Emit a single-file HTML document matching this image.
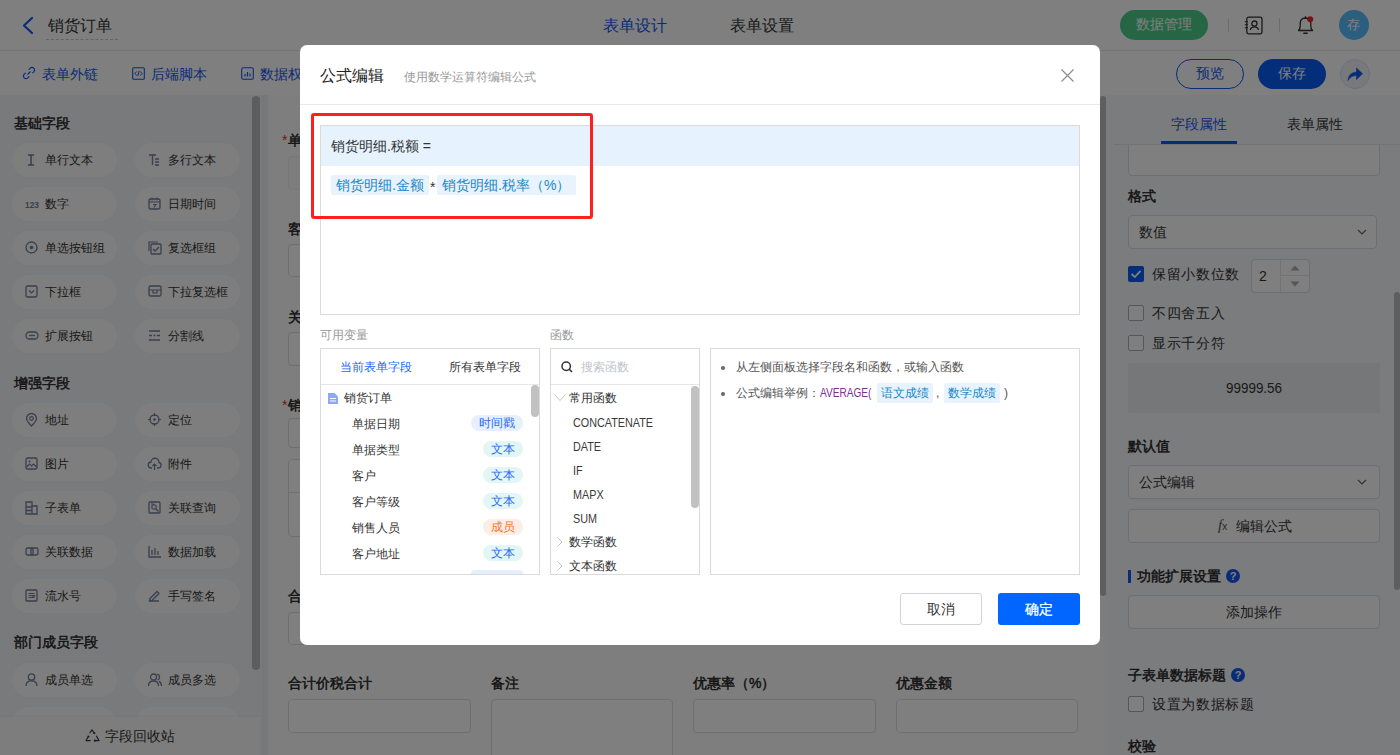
<!DOCTYPE html>
<html><head><meta charset="utf-8">
<style>
*{box-sizing:border-box;margin:0;padding:0}
html,body{width:1400px;height:755px;overflow:hidden;background:#fff}
body{position:relative;font-family:"Liberation Sans",sans-serif;color:#333}
.a{position:absolute}
.t{position:absolute;white-space:nowrap;line-height:20px}
svg{position:absolute;overflow:visible}
/* left chips */
.chip{position:absolute;width:105px;height:34px;border-radius:17px;background:#fcfcfd}
.chip .t{font-size:12px;color:#333;top:7px}
.sec{position:absolute;font-size:14px;-webkit-text-stroke:0.45px #262626;color:#262626;line-height:20px;white-space:nowrap}
.inp{position:absolute;border:1px solid #dcdfe6;border-radius:4px;background:#fff}
.flabel{position:absolute;font-size:14px;-webkit-text-stroke:0.45px #262626;color:#262626;line-height:20px;white-space:nowrap}
.rp .inp{background:#fff}
.cb{position:absolute;width:16px;height:16px;border:1px solid #a9aebd;border-radius:2px;background:#fff}
.mask{position:absolute;left:0;top:0;width:1400px;height:755px;background:rgba(0,0,0,0.5)}
.modal{position:absolute;left:300px;top:45px;width:800px;height:600px;background:#fff;border-radius:7px}
.tag{position:absolute;height:20px;background:#e8f3fd;border-radius:2px;color:#2188c8;font-size:14px;line-height:20px;white-space:nowrap}
.vrow{position:absolute;left:352px;font-size:12px;color:#333;line-height:20px;white-space:nowrap}
.badge{position:absolute;height:16px;border-radius:8px;font-size:12px;line-height:16px;text-align:center;white-space:nowrap}
.fn{position:absolute;font-size:12px;color:#333;line-height:20px;white-space:nowrap}
</style></head><body>

<!-- ===== HEADER ===== -->
<div class="a" style="left:0;top:0;width:1400px;height:95px;background:#fff"></div>
<div class="a" style="left:0;top:50px;width:1400px;height:1px;background:#e9ebef"></div>
<svg style="left:0;top:0" width="40" height="50"><path d="M32 18 L24 25.5 L32 33" fill="none" stroke="#1456f0" stroke-width="2.2" stroke-linecap="round" stroke-linejoin="round"/></svg>
<div class="t" style="left:48px;top:16px;font-size:16px;color:#333">销货订单</div>
<div class="a" style="left:46px;top:39px;width:72px;height:0;border-top:1px dashed #c8c8c8"></div>
<div class="t" style="left:603px;top:16px;font-size:16px;color:#1456f0">表单设计</div>
<div class="t" style="left:730px;top:16px;font-size:16px;color:#333">表单设置</div>

<div class="a" style="left:1120px;top:10px;width:88px;height:30px;border-radius:15px;background:#4ccd8a"></div>
<div class="t" style="left:1136px;top:14px;font-size:14px;color:#fff">数据管理</div>
<div class="a" style="left:1228px;top:18px;width:1px;height:14px;background:#d9d9d9"></div>
<div class="a" style="left:1279px;top:18px;width:1px;height:14px;background:#d9d9d9"></div>
<svg style="left:1244px;top:16px" width="20" height="20"><rect x="2.8" y="1.2" width="15.2" height="16.6" rx="1.8" fill="none" stroke="#333" stroke-width="1.3"/><circle cx="10.4" cy="7.6" r="2.6" fill="none" stroke="#333" stroke-width="1.3"/><path d="M6.3 14 Q6.8 10.8 10.4 10.8 Q14 10.8 14.5 14" fill="none" stroke="#333" stroke-width="1.3"/><path d="M0.8 5.8h3.2M0.8 8.8h3.2M0.8 11.8h3.2" stroke="#333" stroke-width="1.1"/></svg>
<svg style="left:1296px;top:15px" width="20" height="20"><path d="M2.5 15.5 Q4.2 14 4.2 11 L4.2 8.5 Q4.2 3.2 9.5 3 Q14.8 3.2 14.8 8.5 L14.8 11 Q14.8 14 16.5 15.5 Z" fill="none" stroke="#333" stroke-width="1.3" stroke-linejoin="round"/><path d="M7.8 18.3 h3.4" stroke="#333" stroke-width="1.4" stroke-linecap="round"/><path d="M9.5 1.2v1.8" stroke="#333" stroke-width="1.3"/><circle cx="14.2" cy="4.2" r="3" fill="#f5222d"/></svg>
<div class="a" style="left:1339px;top:10px;width:30px;height:30px;border-radius:50%;background:#56bcff"></div>
<div class="t" style="left:1347px;top:15px;font-size:13px;color:#fff">存</div>

<!-- toolbar -->
<svg style="left:22px;top:66px" width="14" height="14"><path d="M5.5 8.5 L8.5 5.5" stroke="#1456f0" stroke-width="1.1"/><path d="M6.8 3.6 L8.2 2.2 Q10 .6 11.8 2.2 Q13.4 4 11.8 5.8 L10.4 7.2 M7.2 10.4 L5.8 11.8 Q4 13.4 2.2 11.8 Q.6 10 2.2 8.2 L3.6 6.8" fill="none" stroke="#1456f0" stroke-width="1.1"/></svg>
<div class="t" style="left:42px;top:64px;font-size:14px;color:#1456f0">表单外链</div>
<svg style="left:132px;top:67px" width="13" height="13"><rect x=".7" y=".7" width="11.6" height="11.6" rx="1" fill="none" stroke="#1456f0" stroke-width="1.1"/><path d="M4.5 4.5 L3 6.5 L4.5 8.5 M8.5 4.5 L10 6.5 L8.5 8.5 M7.2 3.8 L5.8 9.2" fill="none" stroke="#1456f0" stroke-width="1"/></svg>
<div class="t" style="left:151px;top:64px;font-size:14px;color:#1456f0">后端脚本</div>
<svg style="left:241px;top:67px" width="13" height="13"><rect x=".7" y=".7" width="11.6" height="11.6" rx="1.5" fill="none" stroke="#1456f0" stroke-width="1.1"/><path d="M4 9.5v-2.5M6.5 9.5v-4.5M9 9.5v-3" stroke="#1456f0" stroke-width="1.2"/></svg>
<div class="t" style="left:260px;top:64px;font-size:14px;color:#1456f0">数据权限</div>

<div class="a" style="left:1176px;top:59px;width:68px;height:30px;border-radius:15px;border:1.5px solid #1456f0;background:#fff"></div>
<div class="t" style="left:1196px;top:63px;font-size:14px;color:#1456f0">预览</div>
<div class="a" style="left:1258px;top:59px;width:68px;height:30px;border-radius:15px;background:#0a5cf5"></div>
<div class="t" style="left:1278px;top:63px;font-size:14px;color:#fff">保存</div>
<div class="a" style="left:1340px;top:59px;width:30px;height:30px;border-radius:50%;border:1px solid #d6e2f7;background:#eef3fb"></div>
<svg style="left:1346px;top:65px" width="18" height="18"><path d="M2 15.5 Q2.5 7.5 10.5 7 L10.5 3 L16.5 8.8 L10.5 14.5 L10.5 10.6 Q5 10.4 2 15.5 Z" fill="#1456f0" stroke="#1456f0" stroke-width="0.6" stroke-linejoin="round"/></svg>

<!-- ===== LEFT PANEL ===== -->
<div class="a" style="left:0;top:95px;width:262px;height:660px;background:#f3f4f6"></div>
<div class="a" style="left:252px;top:96px;width:8px;height:574px;border-radius:4px;background:#b9babd"></div>
<div class="sec" style="left:14px;top:113px">基础字段</div>
<div class="sec" style="left:14px;top:373px">增强字段</div>
<div class="sec" style="left:14px;top:632px">部门成员字段</div>
<div class="chip" style="left:12px;top:143px"><svg style="left:13px;top:10px" width="14" height="14"><path d="M3 2h6M6 2v10M3 12h6" stroke="#737e9c" stroke-width="1.5" fill="none"/></svg><div class="t" style="left:33px">单行文本</div></div>
<div class="chip" style="left:135px;top:143px"><svg style="left:13px;top:10px" width="14" height="14"><path d="M1 2h7M4.5 2v10M7 6h4M7 9h4M7 12h4" stroke="#737e9c" stroke-width="1.4" fill="none"/></svg><div class="t" style="left:33px">多行文本</div></div>
<div class="chip" style="left:12px;top:187px"><svg style="left:13px;top:10px" width="14" height="14"><text x="0" y="10.5" font-size="9.5" font-weight="bold" fill="#737e9c" font-family="Liberation Sans" textLength="14" lengthAdjust="spacingAndGlyphs">123</text></svg><div class="t" style="left:33px">数字</div></div>
<div class="chip" style="left:135px;top:187px"><svg style="left:13px;top:10px" width="14" height="14"><rect x="1" y="2" width="11" height="10" rx="1.5" stroke="#737e9c" stroke-width="1.3" fill="none"/><path d="M1 5h11M4 0.5v3M9 0.5v3M5 7.5h3l-2 3" stroke="#737e9c" stroke-width="1.1" fill="none"/></svg><div class="t" style="left:33px">日期时间</div></div>
<div class="chip" style="left:12px;top:231px"><svg style="left:13px;top:10px" width="14" height="14"><circle cx="6.5" cy="6.5" r="5.5" stroke="#737e9c" stroke-width="1.3" fill="none"/><circle cx="6.5" cy="6.5" r="1.8" fill="#737e9c"/></svg><div class="t" style="left:33px">单选按钮组</div></div>
<div class="chip" style="left:135px;top:231px"><svg style="left:13px;top:10px" width="14" height="14"><path d="M1 10V1h9" stroke="#737e9c" stroke-width="1.2" fill="none"/><rect x="3" y="3" width="10" height="10" rx="1" stroke="#737e9c" stroke-width="1.3" fill="none"/><path d="M5 8l2 2 4-4" stroke="#737e9c" stroke-width="1.3" fill="none"/></svg><div class="t" style="left:33px">复选框组</div></div>
<div class="chip" style="left:12px;top:275px"><svg style="left:13px;top:10px" width="14" height="14"><rect x="1" y="1" width="11" height="11" rx="1.5" stroke="#737e9c" stroke-width="1.3" fill="none"/><path d="M4 5.5l2.5 2.5 2.5-2.5" stroke="#737e9c" stroke-width="1.2" fill="none"/></svg><div class="t" style="left:33px">下拉框</div></div>
<div class="chip" style="left:135px;top:275px"><svg style="left:13px;top:10px" width="14" height="14"><rect x="1" y="1" width="12" height="10" rx="1.5" stroke="#737e9c" stroke-width="1.3" fill="none"/><path d="M1 5h12M5 5v3h4V5" stroke="#737e9c" stroke-width="1.2" fill="none"/></svg><div class="t" style="left:33px">下拉复选框</div></div>
<div class="chip" style="left:12px;top:319px"><svg style="left:13px;top:10px" width="14" height="14"><rect x="1" y="3" width="12" height="7" rx="3.5" stroke="#737e9c" stroke-width="1.3" fill="none"/><path d="M4 6.5h6" stroke="#737e9c" stroke-width="1.2"/></svg><div class="t" style="left:33px">扩展按钮</div></div>
<div class="chip" style="left:135px;top:319px"><svg style="left:13px;top:10px" width="14" height="14"><path d="M1 2h11M1 6.5h3M5.5 6.5h2M9 6.5h3M1 11h11" stroke="#737e9c" stroke-width="1.3" fill="none"/></svg><div class="t" style="left:33px">分割线</div></div>
<div class="chip" style="left:12px;top:403px"><svg style="left:13px;top:10px" width="14" height="14"><path d="M6.5 13 Q1.5 8 1.5 5.5 A5 5 0 0 1 11.5 5.5 Q11.5 8 6.5 13Z" stroke="#737e9c" stroke-width="1.3" fill="none"/><circle cx="6.5" cy="5.5" r="1.8" stroke="#737e9c" stroke-width="1.2" fill="none"/></svg><div class="t" style="left:33px">地址</div></div>
<div class="chip" style="left:135px;top:403px"><svg style="left:13px;top:10px" width="14" height="14"><circle cx="6.5" cy="6.5" r="4.5" stroke="#737e9c" stroke-width="1.3" fill="none"/><circle cx="6.5" cy="6.5" r="1.3" fill="#737e9c"/><path d="M6.5 0v3M6.5 10v3M0 6.5h3M10 6.5h3" stroke="#737e9c" stroke-width="1.2"/></svg><div class="t" style="left:33px">定位</div></div>
<div class="chip" style="left:12px;top:447px"><svg style="left:13px;top:10px" width="14" height="14"><rect x="1" y="1" width="11" height="11" rx="1.5" stroke="#737e9c" stroke-width="1.3" fill="none"/><path d="M1.5 10l3-3 2 2 2-2 3 3" stroke="#737e9c" stroke-width="1.1" fill="none"/><circle cx="4.5" cy="4.5" r="1" fill="#737e9c"/></svg><div class="t" style="left:33px">图片</div></div>
<div class="chip" style="left:135px;top:447px"><svg style="left:13px;top:10px" width="14" height="14"><path d="M4 11H3.5A3 3 0 0 1 3 5 A4 4 0 0 1 11 5.5 A2.8 2.8 0 0 1 10.5 11H9" stroke="#737e9c" stroke-width="1.3" fill="none"/><path d="M6.5 13V7M4.5 9l2-2 2 2" stroke="#737e9c" stroke-width="1.2" fill="none"/></svg><div class="t" style="left:33px">附件</div></div>
<div class="chip" style="left:12px;top:491px"><svg style="left:13px;top:10px" width="14" height="14"><path d="M1 1h6v12H1zM7 5h5v8H7M1 6h6M1 9.5h6" stroke="#737e9c" stroke-width="1.3" fill="none"/></svg><div class="t" style="left:33px">子表单</div></div>
<div class="chip" style="left:135px;top:491px"><svg style="left:13px;top:10px" width="14" height="14"><rect x="1" y="1" width="11" height="11" rx="1" stroke="#737e9c" stroke-width="1.3" fill="none"/><circle cx="6" cy="6" r="2.2" stroke="#737e9c" stroke-width="1.1" fill="none"/><path d="M7.5 7.5l3 3M3 3h3" stroke="#737e9c" stroke-width="1.1"/></svg><div class="t" style="left:33px">关联查询</div></div>
<div class="chip" style="left:12px;top:535px"><svg style="left:13px;top:10px" width="14" height="14"><rect x="1" y="3" width="7" height="7" rx="1.5" stroke="#737e9c" stroke-width="1.3" fill="none"/><rect x="6" y="3" width="7" height="7" rx="1.5" stroke="#737e9c" stroke-width="1.3" fill="none"/></svg><div class="t" style="left:33px">关联数据</div></div>
<div class="chip" style="left:135px;top:535px"><svg style="left:13px;top:10px" width="14" height="14"><path d="M1 1v11h12M4 10V5M7 10V3M10 10V6" stroke="#737e9c" stroke-width="1.3" fill="none"/></svg><div class="t" style="left:33px">数据加载</div></div>
<div class="chip" style="left:12px;top:579px"><svg style="left:13px;top:10px" width="14" height="14"><rect x="1" y="1" width="11" height="11" rx="1" stroke="#737e9c" stroke-width="1.3" fill="none"/><path d="M3.5 4.5h6M3.5 6.5h6l-2 2M9.5 8.5h-6" stroke="#737e9c" stroke-width="1.1" fill="none"/></svg><div class="t" style="left:33px">流水号</div></div>
<div class="chip" style="left:135px;top:579px"><svg style="left:13px;top:10px" width="14" height="14"><path d="M1 12h10M2 9.5 L9 2.5 L11 4.5 L4 11.5 L1.5 12Z" stroke="#737e9c" stroke-width="1.3" fill="none"/></svg><div class="t" style="left:33px">手写签名</div></div>
<div class="chip" style="left:12px;top:663px"><svg style="left:13px;top:10px" width="14" height="14"><circle cx="6.5" cy="4" r="3.2" stroke="#737e9c" stroke-width="1.3" fill="none"/><path d="M1 13 Q1 7.8 6.5 7.8 Q12 7.8 12 13" stroke="#737e9c" stroke-width="1.3" fill="none"/></svg><div class="t" style="left:33px">成员单选</div></div>
<div class="chip" style="left:135px;top:663px"><svg style="left:13px;top:10px" width="14" height="14"><circle cx="5.5" cy="4" r="3" stroke="#737e9c" stroke-width="1.3" fill="none"/><path d="M0.5 13 Q0.5 8 5.5 8 Q10.5 8 10.5 13M9 1.2A3 3 0 0 1 9.5 7M11 8.3Q13.5 9.5 13.5 13" stroke="#737e9c" stroke-width="1.3" fill="none"/></svg><div class="t" style="left:33px">成员多选</div></div>
<div class="chip" style="left:12px;top:707px"><svg style="left:13px;top:10px" width="14" height="14"><circle cx="6.5" cy="4" r="3.2" stroke="#737e9c" stroke-width="1.3" fill="none"/><path d="M1 13 Q1 7.8 6.5 7.8 Q12 7.8 12 13" stroke="#737e9c" stroke-width="1.3" fill="none"/></svg><div class="t" style="left:33px">部门单选</div></div>
<div class="chip" style="left:135px;top:707px"><svg style="left:13px;top:10px" width="14" height="14"><circle cx="5.5" cy="4" r="3" stroke="#737e9c" stroke-width="1.3" fill="none"/><path d="M0.5 13 Q0.5 8 5.5 8 Q10.5 8 10.5 13M9 1.2A3 3 0 0 1 9.5 7M11 8.3Q13.5 9.5 13.5 13" stroke="#737e9c" stroke-width="1.3" fill="none"/></svg><div class="t" style="left:33px">部门多选</div></div>
<div class="a" style="left:0;top:717px;width:260px;height:38px;background:#fbfbfc;box-shadow:0 -1px 2px rgba(0,0,0,0.03)"></div>
<svg style="left:85px;top:729px" width="15" height="14"><path d="M4.6 4.2 L7 0.9 L9.6 4.6 M8.3 4.3 L9.6 4.6 L10 3.3 M11.2 6.8 L14 11.6 L9.2 11.6 M10.4 10.6 L9.2 11.6 L10.4 12.7 M5.6 11.6 L1 11.6 L3.6 7 M2.4 7.4 L3.6 7 L4 8.3" stroke="#333" stroke-width="1.1" fill="none" stroke-linejoin="round"/></svg>
<div class="t" style="left:105px;top:726px;font-size:14px;color:#333">字段回收站</div>
<div class="a" style="left:262px;top:95px;width:843px;height:660px;background:#edeff2"></div>
<div class="a" style="left:268px;top:95px;width:838px;height:660px;background:#fdfdfd"></div>
<div class="a" style="left:1100px;top:96px;width:6px;height:500px;border-radius:3px;background:#bbbcbf"></div>
<div class="t" style="left:282px;top:130px;font-size:14px;color:#e03131">*</div><div class="flabel" style="left:288px;top:130px">单据编号</div>
<div class="inp" style="left:288px;top:156px;width:182px;height:34px;border-color:#f0f0f0;background:#fbfbfb"></div>
<div class="flabel" style="left:288px;top:219px">客户</div>
<div class="inp" style="left:288px;top:244px;width:182px;height:33px"></div>
<div class="flabel" style="left:288px;top:307px">关联单据</div>
<div class="inp" style="left:288px;top:332px;width:182px;height:34px"></div>
<div class="t" style="left:282px;top:395px;font-size:14px;color:#e03131">*</div><div class="flabel" style="left:288px;top:395px">销货明细</div>
<div class="inp" style="left:288px;top:418px;width:700px;height:30px"></div>
<div class="inp" style="left:288px;top:459px;width:700px;height:78px"></div>
<div class="a" style="left:288px;top:492px;width:700px;height:1px;background:#e4e6ea"></div>
<div class="flabel" style="left:288px;top:586px">合计金额</div>
<div class="inp" style="left:288px;top:612px;width:182px;height:33px"></div>
<div class="flabel" style="left:288px;top:673px">合计价税合计</div>
<div class="flabel" style="left:491px;top:673px">备注</div>
<div class="flabel" style="left:693px;top:673px">优惠率（%）</div>
<div class="flabel" style="left:896px;top:673px">优惠金额</div>
<div class="inp" style="left:288px;top:699px;width:183px;height:34px"></div>
<div class="inp" style="left:491px;top:699px;width:182px;height:70px"></div>
<div class="inp" style="left:693px;top:699px;width:183px;height:34px"></div>
<div class="inp" style="left:896px;top:699px;width:182px;height:34px"></div>
<div class="a" style="left:1106px;top:95px;width:294px;height:660px;background:#f7f8fa"></div>
<div class="inp" style="left:1128px;top:130px;width:252px;height:46px"></div>
<div class="a" style="left:1106px;top:95px;width:294px;height:50px;background:#f7f8fa"></div>
<div class="t" style="left:1171px;top:114px;font-size:14px;color:#1456f0">字段属性</div>
<div class="t" style="left:1287px;top:114px;font-size:14px;color:#333">表单属性</div>
<div class="a" style="left:1114px;top:144px;width:286px;height:1px;background:#e4e6ea"></div>
<div class="a" style="left:1161px;top:141px;width:76px;height:3px;background:#1456f0"></div>
<div class="sec" style="left:1128px;top:186px">格式</div>
<div class="inp" style="left:1128px;top:215px;width:249px;height:34px"></div>
<div class="t" style="left:1139px;top:222px;font-size:14px;color:#333">数值</div>
<svg style="left:1357px;top:229px" width="10" height="6"><path d="M1 1 L5 5 L9 1" fill="none" stroke="#666" stroke-width="1.2"/></svg>
<div class="a" style="left:1128px;top:266px;width:16px;height:16px;border-radius:2px;background:#0a5cf5"></div>
<svg style="left:1128px;top:266px" width="16" height="16"><path d="M3.5 8 L6.8 11 L12.5 4.8" fill="none" stroke="#fff" stroke-width="1.8"/></svg>
<div class="t" style="left:1152px;top:264px;font-size:14px;color:#333;letter-spacing:0.7px">保留小数位数</div>
<div class="inp" style="left:1251px;top:259px;width:59px;height:34px"></div>
<div class="a" style="left:1280px;top:260px;width:1px;height:32px;background:#e4e6ea"></div>
<div class="a" style="left:1281px;top:275px;width:28px;height:1px;background:#e4e6ea"></div>
<svg style="left:1290px;top:264px" width="10" height="24"><path d="M0.5 6.5 L5 1.5 L9.5 6.5Z M0.5 17.5 L5 22.5 L9.5 17.5Z" fill="#a9acb3"/></svg>
<div class="t" style="left:1259px;top:266px;font-size:14px;color:#333">2</div>
<div class="cb" style="left:1128px;top:305px"></div>
<div class="t" style="left:1152px;top:303px;font-size:14px;color:#333;letter-spacing:0.7px">不四舍五入</div>
<div class="cb" style="left:1128px;top:335px"></div>
<div class="t" style="left:1152px;top:333px;font-size:14px;color:#333;letter-spacing:0.7px">显示千分符</div>
<div class="a" style="left:1128px;top:363px;width:252px;height:50px;background:#eceef1;border-radius:2px"></div>
<div class="t" style="left:1226px;top:378px;font-size:14px;color:#333;transform:scaleX(.96);transform-origin:0 50%">99999.56</div>
<div class="sec" style="left:1128px;top:436px">默认值</div>
<div class="inp" style="left:1128px;top:465px;width:252px;height:34px"></div>
<div class="t" style="left:1139px;top:472px;font-size:14px;color:#333">公式编辑</div>
<svg style="left:1357px;top:479px" width="10" height="6"><path d="M1 1 L5 5 L9 1" fill="none" stroke="#666" stroke-width="1.2"/></svg>
<div class="inp" style="left:1128px;top:509px;width:252px;height:34px"></div>
<div class="t" style="left:1218px;top:515px;font-size:15px;color:#555;font-family:'Liberation Serif',serif;font-style:italic">f<span style="font-size:10px;font-style:normal;font-family:'Liberation Sans'">x</span></div>
<div class="t" style="left:1236px;top:516px;font-size:14px;color:#333">编辑公式</div>
<div class="a" style="left:1128px;top:570px;width:3px;height:13px;background:#1456f0"></div>
<div class="sec" style="left:1137px;top:566px">功能扩展设置</div>
<svg style="left:1226px;top:569px" width="14" height="14"><circle cx="7" cy="7" r="7" fill="#1456f0"/><text x="7" y="11" text-anchor="middle" font-size="11" font-weight="bold" fill="#fff" font-family="Liberation Sans">?</text></svg>
<div class="inp" style="left:1128px;top:595px;width:252px;height:34px"></div>
<div class="t" style="left:1226px;top:602px;font-size:14px;color:#333">添加操作</div>
<div class="sec" style="left:1128px;top:665px">子表单数据标题</div>
<svg style="left:1231px;top:668px" width="14" height="14"><circle cx="7" cy="7" r="7" fill="#1456f0"/><text x="7" y="11" text-anchor="middle" font-size="11" font-weight="bold" fill="#fff" font-family="Liberation Sans">?</text></svg>
<div class="cb" style="left:1128px;top:696px"></div>
<div class="t" style="left:1152px;top:694px;font-size:14px;color:#333;letter-spacing:0.7px">设置为数据标题</div>
<div class="sec" style="left:1128px;top:736px">校验</div>
<div class="a" style="left:1394px;top:292px;width:6px;height:298px;border-radius:3px;background:#bbbcbf"></div>
<div class="mask"></div>
<div class="modal"></div>
<div class="t" style="left:320px;top:66px;font-size:16px;color:#222">公式编辑</div>
<div class="t" style="left:404px;top:67px;font-size:12px;color:#999">使用数学运算符编辑公式</div>
<svg style="left:1061px;top:69px" width="13" height="13"><path d="M0.5 0.5 L12.5 12.5 M12.5 0.5 L0.5 12.5" stroke="#8c8c8c" stroke-width="1.15"/></svg>
<div class="a" style="left:300px;top:104px;width:800px;height:1px;background:#e8e8e8"></div>
<div class="a" style="left:320px;top:125px;width:760px;height:190px;border:1px solid #dadada;background:#fff"></div>
<div class="a" style="left:321px;top:126px;width:758px;height:40px;background:#e6f2fd"></div>
<div class="t" style="left:331px;top:136px;font-size:14px;color:#333">销货明细.税额 =</div>
<div class="tag" style="left:331px;top:175px;width:98px;padding-left:5px">销货明细.金额</div>
<div class="t" style="left:430px;top:177px;font-size:14px;color:#333">*</div>
<div class="tag" style="left:437px;top:175px;width:139px;padding-left:5px">销货明细.税率（%）</div>
<div class="a" style="left:311px;top:113px;width:282px;height:106px;border:3px solid #ff1f1f;border-radius:3px"></div>
<div class="t" style="left:320px;top:325px;font-size:12px;color:#999">可用变量</div>
<div class="t" style="left:550px;top:325px;font-size:12px;color:#999">函数</div>
<div class="a" style="left:320px;top:348px;width:220px;height:227px;border:1px solid #dadada;background:#fff"></div>
<div class="a" style="left:321px;top:384px;width:218px;height:1px;background:#e6e6e6"></div>
<div class="t" style="left:340px;top:357px;font-size:12px;color:#1a66ff">当前表单字段</div>
<div class="t" style="left:449px;top:357px;font-size:12px;color:#333">所有表单字段</div>
<svg style="left:328px;top:393px" width="10" height="11"><path d="M0 0h6.5L10 3.5V11H0Z" fill="#8fa8f5"/><path d="M2 5.5h6M2 8h6" stroke="#fff" stroke-width="1"/></svg>
<div class="t" style="left:344px;top:388px;font-size:12px;color:#333">销货订单</div>
<div class="vrow" style="top:414px">单据日期</div><div class="badge" style="left:471px;top:415px;width:52px;background:#e6effd;color:#2b6af2">时间戳</div>
<div class="vrow" style="top:440px">单据类型</div><div class="badge" style="left:483px;top:441px;width:40px;background:#e3f6f6;color:#2b6af2">文本</div>
<div class="vrow" style="top:466px">客户</div><div class="badge" style="left:483px;top:467px;width:40px;background:#e3f6f6;color:#2b6af2">文本</div>
<div class="vrow" style="top:492px">客户等级</div><div class="badge" style="left:483px;top:493px;width:40px;background:#e3f6f6;color:#2b6af2">文本</div>
<div class="vrow" style="top:518px">销售人员</div><div class="badge" style="left:483px;top:519px;width:40px;background:#fdede4;color:#f0782e">成员</div>
<div class="vrow" style="top:544px">客户地址</div><div class="badge" style="left:483px;top:545px;width:40px;background:#e3f6f6;color:#2b6af2">文本</div>
<div class="badge" style="left:471px;top:570px;width:52px;height:4px;border-radius:8px 8px 0 0;background:#e6effd"></div>
<div class="a" style="left:531px;top:385px;width:8px;height:32px;border-radius:4px;background:#c1c1c1"></div>
<div class="a" style="left:550px;top:348px;width:150px;height:227px;border:1px solid #dadada;background:#fff"></div>
<div class="a" style="left:551px;top:384px;width:148px;height:1px;background:#e6e6e6"></div>
<svg style="left:561px;top:361px" width="12" height="12"><circle cx="5.2" cy="5.2" r="4.2" fill="none" stroke="#333" stroke-width="1.5"/><path d="M8.2 8.2 L11 11" stroke="#333" stroke-width="1.6"/></svg>
<div class="t" style="left:581px;top:357px;font-size:12px;color:#c0c4cc">搜索函数</div>
<svg style="left:554px;top:394px" width="12" height="8"><path d="M0.5 0.5 L6 6.5 L11.5 0.5" fill="none" stroke="#c0c4cc" stroke-width="1"/></svg>
<div class="fn" style="left:569px;top:388px">常用函数</div>
<div class="fn" style="left:573px;top:413px;transform:scaleX(.9);transform-origin:0 50%;color:#3a3a3a">CONCATENATE</div>
<div class="fn" style="left:573px;top:437px;transform:scaleX(.9);transform-origin:0 50%;color:#3a3a3a">DATE</div>
<div class="fn" style="left:573px;top:461px;transform:scaleX(.9);transform-origin:0 50%;color:#3a3a3a">IF</div>
<div class="fn" style="left:573px;top:485px;transform:scaleX(.9);transform-origin:0 50%;color:#3a3a3a">MAPX</div>
<div class="fn" style="left:573px;top:509px;transform:scaleX(.9);transform-origin:0 50%;color:#3a3a3a">SUM</div>
<svg style="left:557px;top:537px" width="6" height="10"><path d="M0.5 0.5 L5 5 L0.5 9.5" fill="none" stroke="#c0c4cc" stroke-width="1"/></svg>
<div class="fn" style="left:569px;top:532px">数学函数</div>
<svg style="left:557px;top:561px" width="6" height="10"><path d="M0.5 0.5 L5 5 L0.5 9.5" fill="none" stroke="#c0c4cc" stroke-width="1"/></svg>
<div class="fn" style="left:569px;top:556px;height:18px;overflow:hidden">文本函数</div>
<div class="a" style="left:691px;top:386px;width:8px;height:122px;border-radius:4px;background:#c1c1c1"></div>
<div class="a" style="left:710px;top:348px;width:370px;height:227px;border:1px solid #dadada;background:#fff"></div>
<div class="a" style="left:721px;top:366px;width:4px;height:4px;border-radius:2px;background:#666"></div>
<div class="t" style="left:736px;top:357px;font-size:12px;color:#555">从左侧面板选择字段名和函数，或输入函数</div>
<div class="a" style="left:721px;top:392px;width:4px;height:4px;border-radius:2px;background:#666"></div>
<div class="t" style="left:736px;top:383px;font-size:12px;color:#555">公式编辑举例：</div>
<div class="t" style="left:820px;top:383px;font-size:12px;color:#7d2f8f;transform:scaleX(.84);transform-origin:0 50%">AVERAGE(</div>
<div class="tag" style="left:877px;top:383px;width:56px;font-size:12px;text-align:center">语文成绩</div>
<div class="t" style="left:936px;top:383px;font-size:12px;color:#555">,</div>
<div class="tag" style="left:944px;top:383px;width:56px;font-size:12px;text-align:center">数学成绩</div>
<div class="t" style="left:1004px;top:383px;font-size:12px;color:#555">)</div>
<div class="a" style="left:900px;top:593px;width:82px;height:32px;border:1px solid #d0d3d9;border-radius:3px;background:#fff"></div>
<div class="t" style="left:927px;top:599px;font-size:14px;color:#333">取消</div>
<div class="a" style="left:998px;top:593px;width:82px;height:32px;border-radius:3px;background:#0066ff"></div>
<div class="t" style="left:1025px;top:599px;font-size:14px;color:#fff;-webkit-text-stroke:0.25px #fff">确定</div>
</body></html>
